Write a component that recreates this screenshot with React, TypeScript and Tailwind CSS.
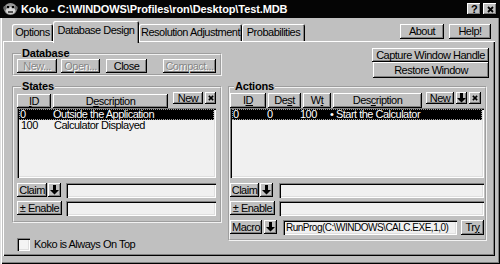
import React from 'react';

// raised / sunken 3D bevels, Win9x style
const raised = "bg-[#c0c0c0] shadow-[inset_-1px_-1px_#000,inset_1px_1px_#fff,inset_-2px_-2px_#808080]";
const sunken = "bg-[#f0f0f0] shadow-[inset_1px_1px_#808080,inset_2px_2px_#000,inset_-1px_-1px_#fff,inset_-2px_-2px_#dfdfdf]";

interface BtnProps {
  className?: string;
  disabled?: boolean;
  children?: React.ReactNode;
}

const Btn: React.FC<BtnProps> = ({ className = "", disabled, children }) => (
  <div
    className={`${raised} flex items-center justify-center shrink-0 leading-none ${
      disabled ? "text-[#868686] [text-shadow:1px_1px_#fff]" : "text-black"
    } ${className}`}
  >
    {children}
  </div>
);

const ArrowDown = () => (
  <svg width="9" height="10" viewBox="0 0 9 10">
    <path d="M3 0h3v5h3L4.5 9.5 0 5h3z" fill="#000" />
  </svg>
);

const Cross = ({ size = 7 }: { size?: number }) => (
  <svg width={size} height={size} viewBox="0 0 7 7">
    <path d="M1 1l5 5M6 1L1 6" stroke="#000" strokeWidth="1.8" />
  </svg>
);

const KokoIcon = () => (
  <svg width="15" height="14" viewBox="0 0 15 14">
    <ellipse cx="7.5" cy="7" rx="6.5" ry="6" fill="#9a9a9a" />
    <ellipse cx="2" cy="6" rx="1.8" ry="2" fill="#6a6a6a" />
    <ellipse cx="13" cy="6" rx="1.8" ry="2" fill="#6a6a6a" />
    <ellipse cx="7.5" cy="8.5" rx="4.5" ry="3.6" fill="#d8d8d8" />
    <rect x="4" y="4" width="2.2" height="2.2" fill="#000" />
    <rect x="8.8" y="4" width="2.2" height="2.2" fill="#000" />
    <path d="M5 10h5" stroke="#000" strokeWidth="1.2" />
  </svg>
);

const Group: React.FC<{ label: string; className?: string; children: React.ReactNode }> = ({
  label,
  className = "",
  children,
}) => (
  <fieldset className={`border-2 [border-style:groove] border-[#f2f2f2] ${className}`}>
    <legend className="ml-[4px] px-[1px] font-bold leading-[11px] tracking-[-0.2px]">{label}</legend>
    {children}
  </fieldset>
);

const Field: React.FC<{ className?: string; children?: React.ReactNode }> = ({ className = "", children }) => (
  <div className={`${sunken} h-[15px] flex items-center ${className}`}>{children}</div>
);

const Tab: React.FC<{ label: string; active?: boolean; className?: string }> = ({ label, active, className = "" }) => (
  <div
    className={`relative rounded-t-[2px] flex items-center justify-center bg-[#c0c0c0] shadow-[inset_1px_1px_#fff,inset_-1px_0_#000,inset_-2px_0_#808080] ${
      active ? "h-[22px] -mb-[2px] z-10 pb-[3px]" : "h-[17px]"
    } ${className}`}
  >
    {label}
  </div>
);

const selRow = "h-[11px] leading-[11px] bg-black text-white outline outline-1 outline-dotted outline-[#9a9a9a] -outline-offset-1";

export default function App() {
  return (
    <div className="w-[500px] h-[264px] overflow-hidden bg-[#c0c0c0] font-['Liberation_Sans',Arial,sans-serif] text-[11px] tracking-[-0.5px] text-black shadow-[inset_1px_0_#dfdfdf,inset_2px_0_#fff,inset_-1px_-1px_#000,inset_-2px_-2px_#808080]">
      {/* title bar */}
      <div className="h-[18px] bg-[#050505] flex items-center pl-[3px] pr-[3px]">
        <KokoIcon />
        <span className="ml-[3px] text-white font-bold text-[11px] tracking-[-0.1px]">
          Koko - C:\WINDOWS\Profiles\ron\Desktop\Test.MDB
        </span>
        <div className="ml-auto flex gap-[2px]">
          <Btn className="w-[14px] h-[12px] font-bold text-[11px]">?</Btn>
          <Btn className="w-[14px] h-[12px]">
            <Cross />
          </Btn>
        </div>
      </div>

      {/* tabs + about/help */}
      <div className="h-[23px] pt-[3px] pl-[12px] pr-[9px] flex items-end">
        <Tab label="Options" className="w-[41px]" />
        <Tab label="Database Design" active className="w-[86px]" />
        <Tab label="Resolution Adjustment" className="w-[103px]" />
        <Tab label="Probabilities" className="w-[63px]" />
        <div className="ml-auto self-start mt-[3px] flex gap-[5px]">
          <Btn className="w-[44px] h-[15px]">About</Btn>
          <Btn className="w-[42px] h-[15px]">Help!</Btn>
        </div>
      </div>

      {/* tab panel */}
      <div className="ml-[3px] w-[492px] h-[215px] pt-[7px] pl-[9px] flex gap-[6px] shadow-[inset_1px_1px_#fff,inset_-1px_-1px_#000,inset_-2px_-2px_#808080]">
        {/* left column */}
        <div className="w-[210px] flex flex-col">
          <Group label="Database" className="pl-[3px] pb-[1px]">
            <div className="flex">
              <Btn disabled className="w-[40px] h-[14px]">New...</Btn>
              <Btn disabled className="w-[39px] h-[14px] ml-[4px]">Open...</Btn>
              <Btn className="w-[41px] h-[14px] ml-[6px]">Close</Btn>
              <Btn disabled className="w-[53px] h-[14px] ml-[16px]">Compact...</Btn>
            </div>
          </Group>

          <Group label="States" className="mt-[5px] pl-[3px] pr-[4px] pb-[5px]">
            <div className="flex items-start">
              <Btn className="w-[34px] h-[14px] mt-[2px]">
                <span className="underline">I</span>D
              </Btn>
              <Btn className="w-[115px] h-[14px] mt-[2px] ml-[2px]">
                D<span className="underline">e</span>scription
              </Btn>
              <Btn className="w-[30px] h-[12px] ml-[5px]">
                Ne<span className="underline">w</span>
              </Btn>
              <Btn className="w-[11px] h-[12px] ml-[2px]">
                <Cross size={6} />
              </Btn>
            </div>
            <div className={`${sunken} h-[70px] p-[2px] pt-[1px]`}>
              <div className={`grid grid-cols-[33px_1fr] pl-[1px] ${selRow}`}>
                <span>0</span>
                <span>Outside the Application</span>
              </div>
              <div className="grid grid-cols-[33px_1fr] h-[11px] leading-[11px] pl-[2px]">
                <span>100</span>
                <span>Calculator Displayed</span>
              </div>
            </div>
            <div className="flex mt-[5px]">
              <Btn className="w-[30px] h-[14px]">Claim</Btn>
              <Btn className="w-[13px] h-[14px] ml-[1px]">
                <ArrowDown />
              </Btn>
              <Field className="flex-1 ml-[5px]" />
            </div>
            <div className="flex mt-[3px]">
              <Btn className="w-[45px] h-[14px]">± Enable</Btn>
              <Field className="flex-1 ml-[4px]" />
            </div>
          </Group>

          <div className="flex items-center mt-[13px] pl-[5px]">
            <div className={`${sunken} bg-[#f4f4f4] w-[13px] h-[13px]`} />
            <span className="ml-[4px]">Koko is Always On Top</span>
          </div>
        </div>

        {/* right column */}
        <div className="w-[261px] flex flex-col">
          <div className="flex flex-col items-end">
            <Btn className="w-[117px] h-[14px]">Capture Window Handle</Btn>
            <Btn className="w-[116px] h-[16px]">Restore Window</Btn>
          </div>

          <Group label="Actions" className="mt-[3px] mr-[2px] pr-[1px] pb-[4px]">
            <div className="flex items-start">
              <Btn className="w-[36px] h-[15px] mt-[1px]">
                I<span className="underline">D</span>
              </Btn>
              <Btn className="w-[33px] h-[15px] mt-[1px] ml-[2px]">
                De<span className="underline">s</span>t
              </Btn>
              <Btn className="w-[28px] h-[15px] mt-[1px] ml-[2px]">
                W<span className="underline">t</span>
              </Btn>
              <Btn className="w-[89px] h-[15px] mt-[1px] ml-[2px]">
                Des<span className="underline">c</span>ription
              </Btn>
              <Btn className="w-[28px] h-[12px] ml-[4px]">
                <span className="underline">N</span>ew
              </Btn>
              <Btn className="w-[11px] h-[12px] ml-[2px]">
                <ArrowDown />
              </Btn>
              <Btn className="w-[12px] h-[12px] ml-[2px]">
                <Cross size={6} />
              </Btn>
            </div>
            <div className={`${sunken} h-[70px] p-[2px] pt-[1px]`}>
              <div className={`grid grid-cols-[34px_33px_30px_1fr] pl-[1px] ${selRow}`}>
                <span>0</span>
                <span>0</span>
                <span>100</span>
                <span>• Start the Calculator</span>
              </div>
            </div>
            <div className="flex mt-[5px]">
              <Btn className="w-[29px] h-[14px]">Claim</Btn>
              <Btn className="w-[13px] h-[14px] ml-[1px]">
                <ArrowDown />
              </Btn>
              <Field className="flex-1 ml-[6px]" />
            </div>
            <div className="flex mt-[3px]">
              <Btn className="w-[45px] h-[14px]">± Enable</Btn>
              <Field className="flex-1 ml-[4px]" />
            </div>
            <div className="flex mt-[4px]">
              <Btn className="w-[32px] h-[14px]">Macro</Btn>
              <Btn className="w-[13px] h-[14px] ml-[2px]">
                <ArrowDown />
              </Btn>
              <Field className="w-[174px] ml-[6px] pl-[3px] text-[10px] shadow-[inset_1px_1px_#404040,inset_-1px_-1px_#fff]">
                RunProg(C:\WINDOWS\CALC.EXE,1,0)
              </Field>
              <Btn className="w-[23px] h-[15px] ml-[4px]">
                Tr<span className="underline">y</span>
              </Btn>
            </div>
          </Group>
        </div>
      </div>
    </div>
  );
}
